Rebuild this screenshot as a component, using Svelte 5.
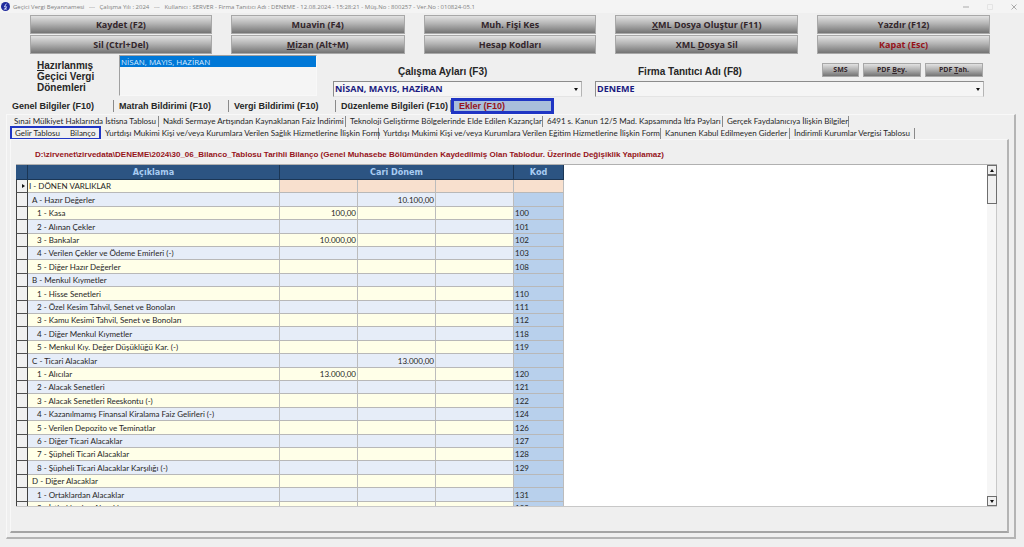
<script>
  const actions = [
    { main: 'Kaydet (F2)', sub: 'Sil (Ctrl+Del)' },
    { main: 'Muavin (F4)', subKey: 'M', sub: 'izan (Alt+M)' },
    { main: 'Muh. Fişi Kes', sub: 'Hesap Kodları' },
    { mainKey: 'X', main: 'ML Dosya Oluştur (F11)', subPre: 'XML ', subKey: 'D', sub: 'osya Sil' },
    { main: 'Yazdır (F12)', sub: 'Kapat (Esc)', danger: true }
  ];

  const mainTabs = [
    { label: 'Genel Bilgiler (F10)', width: 103 },
    { label: 'Matrah Bildirimi (F10)', width: 115 },
    { label: 'Vergi Bildirimi (F10)', width: 107 },
    { label: 'Düzenleme Bilgileri (F10)', width: 115 }
  ];

  const upperTabs = [
    { label: 'Sınai Mülkiyet Haklarında İstisna Tablosu', width: 149 },
    { label: 'Nakdi Sermaye Artışından Kaynaklanan Faiz İndirimi', width: 187 },
    { label: 'Teknoloji Geliştirme Bölgelerinde Elde Edilen Kazançlar', width: 197 },
    { label: '6491 s. Kanun 12/5 Mad. Kapsamında İtfa Payları', width: 180 },
    { label: 'Gerçek Faydalanıcıya İlişkin Bilgiler', width: 126 }
  ];

  const lowerTabs = [
    { label: 'Yurtdışı Mukimi Kişi ve/veya Kurumlara Verilen Sağlık Hizmetlerine İlişkin Form', width: 278 },
    { label: 'Yurtdışı Mukimi Kişi ve/veya Kurumlara Verilen Eğitim Hizmetlerine İlişkin Form', width: 282 },
    { label: 'Kanunen Kabul Edilmeyen Giderler', width: 129 },
    { label: 'İndirimli Kurumlar Vergisi Tablosu', width: 125 }
  ];

  const source =
    'D:\\zirvenet\\zirvedata\\DENEME\\2024\\30_06_Bilanco_Tablosu Tarihli Bilanço (Genel Muhasebe Bölümünden Kaydedilmiş Olan Tablodur. Üzerinde Değişiklik Yapılamaz)';

  const rows = [
    { level: 0, name: 'I - DÖNEN VARLIKLAR' },
    { level: 1, name: 'A - Hazır Değerler', total: '10.100,00' },
    { level: 2, name: '1 - Kasa', amount: '100,00', code: '100' },
    { level: 2, name: '2 - Alınan Çekler', code: '101' },
    { level: 2, name: '3 - Bankalar', amount: '10.000,00', code: '102' },
    { level: 2, name: '4 - Verilen Çekler ve Ödeme Emirleri (-)', code: '103' },
    { level: 2, name: '5 - Diğer Hazır Değerler', code: '108' },
    { level: 1, name: 'B - Menkul Kıymetler' },
    { level: 2, name: '1 - Hisse Senetleri', code: '110' },
    { level: 2, name: '2 - Özel Kesim Tahvil, Senet ve Bonoları', code: '111' },
    { level: 2, name: '3 - Kamu Kesimi Tahvil, Senet ve Bonoları', code: '112' },
    { level: 2, name: '4 - Diğer Menkul Kıymetler', code: '118' },
    { level: 2, name: '5 - Menkul Kıy. Değer Düşüklüğü Kar. (-)', code: '119' },
    { level: 1, name: 'C - Ticari Alacaklar', total: '13.000,00' },
    { level: 2, name: '1 - Alıcılar', amount: '13.000,00', code: '120' },
    { level: 2, name: '2 - Alacak Senetleri', code: '121' },
    { level: 2, name: '3 - Alacak Senetleri Reeskontu (-)', code: '122' },
    { level: 2, name: '4 - Kazanılmamış Finansal Kiralama Faiz Gelirleri (-)', code: '124' },
    { level: 2, name: '5 - Verilen Depozito ve Teminatlar', code: '126' },
    { level: 2, name: '6 - Diğer Ticari Alacaklar', code: '127' },
    { level: 2, name: '7 - Şüpheli Ticari Alacaklar', code: '128' },
    { level: 2, name: '8 - Şüpheli Ticari Alacaklar Karşılığı (-)', code: '129' },
    { level: 1, name: 'D - Diğer Alacaklar' },
    { level: 2, name: '1 - Ortaklardan Alacaklar', code: '131' },
    { level: 2, name: '2 - İştiraklerden Alacaklar', code: '132' }
  ];
</script>

<div class="window">
  <header class="titlebar">
    <svg class="logo" viewBox="0 0 16 16" aria-hidden="true">
      <circle cx="8" cy="8" r="8" fill="#1f2a9c" />
      <path d="M9.5 3 6 8.5h4L7 13M5 12.5h5.5" fill="none" stroke="#dfe6ff" stroke-width="1.6" />
    </svg>
    <span class="caption">Geçici Vergi Beyannamesi &nbsp; --- &nbsp; Çalışma Yılı : 2024 &nbsp; --- &nbsp; Kullanıcı : SERVER - Firma Tanıtıcı Adı : DENEME - 12.08.2024 - 15:28:21 - Müş.No : 800257 - Ver.No : 010824-05.1</span>
    <div class="window-buttons">
      <button aria-label="Küçült"><svg viewBox="0 0 8 8"><path d="M1 4h6" /></svg></button>
      <button aria-label="Büyüt" disabled><svg viewBox="0 0 8 8"><path d="M1.5 1.5h5v5h-5z" /></svg></button>
      <button aria-label="Kapat"><svg viewBox="0 0 8 8"><path d="M1.5 1.5l5 5M6.5 1.5l-5 5" /></svg></button>
    </div>
  </header>

  <div class="toolbar">
    {#each actions as action}
      <div class="action-pair">
        <button class="metal">{#if action.mainKey}<u>{action.mainKey}</u>{/if}{action.main}</button>
        <button class="metal" class:danger={action.danger}>{action.subPre ?? ''}{#if action.subKey}<u>{action.subKey}</u>{/if}{action.sub}</button>
      </div>
    {/each}
  </div>

  <section class="filters">
    <label class="periods-label" for="periods"><u>H</u>azırlanmış<br />Geçici Vergi<br />Dönemleri</label>
    <select id="periods" class="periods" size="3">
      <option selected>NİSAN, MAYIS, HAZİRAN</option>
    </select>

    <div class="field months">
      <label for="months">Çalışma Ayları (F3)</label>
      <div class="combo">
        <select id="months"><option>NİSAN, MAYIS, HAZİRAN</option></select>
        <span class="combo-arrow"></span>
      </div>
    </div>

    <div class="field company">
      <div class="company-head">
        <label for="company">Firma Tanıtıcı Adı (F8)</label>
        <div class="exports">
          <button class="metal small">SMS</button>
          <button class="metal small">PDF <u>B</u>ey.</button>
          <button class="metal small">PDF <u>T</u>ah.</button>
        </div>
      </div>
      <div class="combo">
        <select id="company"><option>DENEME</option></select>
        <span class="combo-arrow"></span>
      </div>
    </div>
  </section>

  <nav class="main-tabs">
    {#each mainTabs as tab}
      <button class="main-tab" style:width="{tab.width}px">{tab.label}</button>
    {/each}
    <button class="main-tab current">Ekler (F10)</button>
  </nav>

  <main class="page">
    <nav class="sub-tabs">
      {#each upperTabs as tab}
        <button class="sub-tab" style:width="{tab.width}px">{tab.label}</button>
      {/each}
    </nav>
    <nav class="sub-tabs lower">
      <div class="marked">
        <button class="sub-tab">Gelir Tablosu</button>
        <button class="sub-tab raised">Bilanço</button>
      </div>
      {#each lowerTabs as tab}
        <button class="sub-tab" style:width="{tab.width}px">{tab.label}</button>
      {/each}
    </nav>

    <div class="sheet">
      <p class="source">{source}</p>
      <div class="grid">
        <div class="rows">
          <table>
            <colgroup>
              <col class="col-mark" />
              <col class="col-name" />
              <col class="col-amount" />
              <col class="col-amount" />
              <col class="col-amount" />
              <col class="col-code" />
            </colgroup>
            <thead>
              <tr>
                <th></th>
                <th>Açıklama</th>
                <th colspan="3">Cari Dönem</th>
                <th>Kod</th>
              </tr>
            </thead>
            <tbody>
              {#each rows as row, i}
                <tr class:heading={i === 0}>
                  <td class="mark">{#if i === 0}<span class="pointer"></span>{/if}</td>
                  <td class="name level-{row.level}">{row.name}</td>
                  <td class="amount">{row.amount ?? ''}</td>
                  <td class="amount">{row.total ?? ''}</td>
                  <td class="amount"></td>
                  <td class="code">{row.code ?? ''}</td>
                </tr>
              {/each}
            </tbody>
          </table>
        </div>
        <div class="scrollbar">
          <button class="scroll-button" aria-label="Yukarı"><span class="arrow up"></span></button>
          <div class="thumb"></div>
          <button class="scroll-button end" aria-label="Aşağı"><span class="arrow down"></span></button>
        </div>
      </div>
    </div>
  </main>
</div>

<style>
  :global(body) {
    background: #efefef;
  }

  .window {
    display: flex;
    flex-direction: column;
    height: 100vh;
    box-sizing: border-box;
    padding-bottom: 8px;
    overflow: hidden;
    color: #262626;
    font-family: 'Liberation Sans', Arial, sans-serif;
    font-size: 8px;
  }

  button,
  select {
    margin: 0;
    padding: 0;
    border: 0;
    border-radius: 0;
    background: none;
    color: inherit;
    font: inherit;
  }

  .titlebar {
    display: flex;
    align-items: center;
    height: 13px;
    flex: none;
    background: #f4f4f4;
    color: #808080;
    font-family: 'Open Sans', sans-serif;
    font-size: 6px;
  }

  .logo {
    width: 9px;
    height: 9px;
    margin: 0 3px 0 1px;
  }

  .caption {
    flex: 1;
    white-space: nowrap;
  }

  .window-buttons {
    display: flex;
    gap: 16px;
    padding-right: 6px;
  }

  .window-buttons button {
    display: flex;
  }

  .window-buttons svg {
    width: 8px;
    height: 8px;
    fill: none;
    stroke: #aaa;
    stroke-width: 1;
  }

  .window-buttons button:disabled svg {
    stroke: #e4e4e4;
  }

  .toolbar {
    display: grid;
    grid-template-columns: 182fr 174fr 173fr 183fr 173fr;
    gap: 19px;
    flex: none;
    padding: 2px 34px 0 30px;
  }

  .action-pair {
    display: flex;
    flex-direction: column;
    gap: 1px;
  }

  .metal {
    height: 19px;
    border: 1px solid #a8a8a8;
    background: linear-gradient(#e2e2e2, #b4b4b4 45%, #747474);
    color: #33262b;
    font-family: 'Open Sans', sans-serif;
    font-size: 9px;
    font-weight: 700;
    line-height: 16px;
  }

  .metal.danger {
    color: #96141a;
  }

  .metal.small {
    width: 58px;
    height: 14px;
    font-size: 7px;
    line-height: 12px;
  }

  .metal.small:first-child {
    width: 37px;
  }

  .filters {
    display: flex;
    flex: none;
    height: 43px;
    padding: 1px 40px 0 37px;
    font-size: 10px;
    font-weight: 700;
    line-height: 11px;
  }

  .periods-label {
    width: 64px;
    margin-right: 18px;
    padding-top: 5px;
  }

  .periods {
    width: 198px;
    height: 41px;
    border: 1px solid #a0a0a0;
    border-right-color: #f8f8f8;
    border-bottom-color: #f8f8f8;
    background: #f5f5f5;
    font-family: 'Open Sans', sans-serif;
    font-size: 8px;
    font-weight: 400;
    overflow: hidden;
  }

  .periods option {
    min-height: 11px;
    padding: 0 1px;
    line-height: 11px;
  }

  .periods option:checked {
    background: #0078d7 linear-gradient(#0078d7, #0078d7);
    color: #fff;
    -webkit-text-fill-color: #d5ebff;
  }

  .field {
    display: flex;
    flex-direction: column;
    justify-content: flex-end;
    padding-bottom: 1px;
  }

  .months {
    width: 249px;
    margin: 0 13px 0 16px;
  }

  .months label {
    padding: 0 0 4px 65px;
  }

  .company {
    flex: 1;
  }

  .company-head {
    display: flex;
    justify-content: space-between;
    align-items: flex-end;
    padding: 0 1px 4px 43px;
  }

  .exports {
    display: flex;
    gap: 4px;
  }

  .combo {
    position: relative;
    border: 1px solid #8c8c8c;
    border-right-color: #b4b4b4;
    border-bottom-color: #e4e4e4;
    background: #f5f5f5;
  }

  .combo select {
    display: block;
    width: 100%;
    height: 14px;
    padding-left: 1px;
    appearance: none;
    color: #1a1a80;
    font-family: 'Open Sans', sans-serif;
    font-size: 9px;
    line-height: 14px;
  }

  .combo-arrow {
    position: absolute;
    top: 6px;
    right: 3px;
    border: 2px solid transparent;
    border-top: 3px solid #111;
    border-bottom: 0;
    pointer-events: none;
  }

  .main-tabs {
    display: flex;
    align-items: center;
    flex: none;
    height: 16px;
    padding-left: 11px;
    font-size: 9px;
    font-weight: 700;
  }

  .main-tab {
    box-sizing: border-box;
    height: 12px;
    padding-left: 5px;
    border-right: 1px solid #8a8a8a;
    text-align: left;
    white-space: nowrap;
  }

  .main-tab:first-child {
    padding-left: 1px;
  }

  .main-tab.current {
    width: 103px;
    height: 16px;
    border: 3px solid #1f35c4;
    background: #a9bfdb;
    color: #96141a;
    line-height: 8px;
  }

  .page {
    display: flex;
    flex-direction: column;
    flex: 1;
    min-height: 0;
    margin: 0 8px 0 6px;
    padding: 1px 5px 4px 3px;
    border: 1px solid #f8f8f8;
    border-right: 2px solid #b4b4b4;
    border-bottom: 2px solid #b4b4b4;
  }

  .sub-tabs {
    display: flex;
    align-items: center;
    flex: none;
    height: 11px;
    font-family: Lato, sans-serif;
  }

  .sub-tabs.lower {
    height: 12px;
  }

  .sub-tab {
    box-sizing: border-box;
    height: 11px;
    padding-left: 4px;
    border-right: 1px solid #8a8a8a;
    line-height: 11px;
    text-align: left;
    white-space: nowrap;
  }

  .marked {
    display: flex;
    box-sizing: border-box;
    width: 91px;
    height: 14px;
    border: 2px solid #1f35c4;
  }

  .marked .sub-tab {
    border-right: 0;
    padding-left: 3px;
  }

  .marked .raised {
    padding-left: 10px;
    line-height: 9px;
  }

  .sheet {
    display: flex;
    flex-direction: column;
    flex: 1;
    min-height: 0;
    padding: 0 10px 24px 5px;
    border: 1px solid #f8f8f8;
    border-right: 2px solid #b4b4b4;
    border-bottom: 2px solid #a4a4a4;
  }

  .source {
    margin: 0;
    padding: 10px 0 4px 19px;
    color: #96141a;
    font-weight: 700;
    line-height: 10px;
    white-space: nowrap;
  }

  .grid {
    display: flex;
    flex: 1;
    min-height: 0;
    border-top: 1px solid #b0b0b0;
    border-bottom: 1px solid #c8c8c8;
    background: #fff;
  }

  .rows {
    flex: 1;
    overflow: hidden;
  }

  table {
    width: 548px;
    table-layout: fixed;
    border-collapse: separate;
    border-spacing: 0;
    font-family: Lato, sans-serif;
  }

  .col-mark {
    width: 12px;
  }

  .col-name {
    width: 252px;
  }

  .col-amount {
    width: 78px;
  }

  .col-code {
    width: 50px;
  }

  th {
    height: 15px;
    padding: 0;
    border-right: 1px solid #1b3655;
    border-bottom: 1px solid #1b3655;
    box-sizing: border-box;
    background: #2c5482;
    color: #a9ccf2;
    font-family: 'DejaVu Sans Condensed', 'DejaVu Sans', sans-serif;
    font-size: 9px;
    line-height: 14px;
  }

  tr {
    height: 13px;
  }

  tbody tr:nth-child(5n + 2),
  tbody tr:nth-child(5n + 4) {
    height: 14px;
  }

  td {
    padding: 0 1px;
    border-right: 1px solid #bcbcbc;
    border-bottom: 1px solid #b8b8b8;
    background: #ffffe8;
    line-height: 12px;
    white-space: nowrap;
    overflow: hidden;
  }

  tr:nth-child(even) td {
    background: #e6edf8;
  }

  td.mark,
  tr:nth-child(even) td.mark {
    border-left: 1px solid #404040;
    border-right-color: #404040;
    border-bottom-color: #505050;
    background: #f0f0f0;
  }

  .pointer {
    display: block;
    width: 0;
    margin-left: 4px;
    border: 2px solid transparent;
    border-left: 3px solid #111;
    border-right: 0;
  }

  .level-1 {
    padding-left: 4px;
  }

  .level-2 {
    padding-left: 9px;
  }

  .amount {
    text-align: right;
  }

  td.code,
  tr:nth-child(even) td.code {
    background: #b8d0ec;
  }

  tr.heading .amount,
  tr.heading td.code {
    background: #f8e0ce;
  }

  .scrollbar {
    display: flex;
    flex-direction: column;
    box-sizing: border-box;
    width: 10px;
    border-right: 1px solid #c8c8c8;
    background: #f6f6f6;
  }

  .scroll-button {
    display: flex;
    align-items: center;
    justify-content: center;
    box-sizing: border-box;
    width: 10px;
    height: 10px;
    border: 1px solid #6e6e6e;
    background: #f0f0f0;
  }

  .scroll-button.end {
    margin-top: auto;
  }

  .thumb {
    box-sizing: border-box;
    width: 10px;
    height: 29px;
    border: 1px solid #6e6e6e;
    background: #f0f0f0;
  }

  .arrow {
    border: 2px solid transparent;
  }

  .arrow.up {
    border-top: 0;
    border-bottom: 3px solid #111;
  }

  .arrow.down {
    border-bottom: 0;
    border-top: 3px solid #111;
  }
</style>
